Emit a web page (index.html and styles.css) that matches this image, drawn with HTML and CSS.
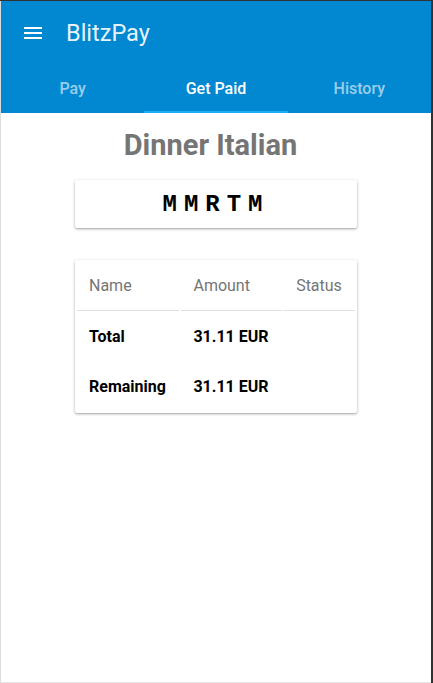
FILE: index.html
```html
<!DOCTYPE html>
<html>
<head>
<meta charset="utf-8">
<link rel="stylesheet" href="styles.css">
</head>
<body>
<div class="frame">
  <header class="appbar">
    <div class="toolbar">
      <svg class="menu" width="24" height="24" viewBox="0 0 24 24"><path fill="#fff" d="M3 18h18v-2H3v2zm0-5h18v-2H3v2zm0-7v2h18V6H3z"/></svg>
      <span class="brand">BlitzPay</span>
    </div>
    <nav class="tabs">
      <div class="tab">Pay</div>
      <div class="tab active">Get Paid</div>
      <div class="tab">History</div>
    </nav>
  </header>
  <main class="content">
    <h1 class="title">Dinner Italian</h1>
    <div class="card code">MMRTM</div>
    <div class="card">
      <table class="bill">
        <thead>
          <tr><th>Name</th><th>Amount</th><th>Status</th></tr>
        </thead>
        <tbody>
          <tr><td>Total</td><td>31.11 EUR</td><td></td></tr>
          <tr><td>Remaining</td><td>31.11 EUR</td><td></td></tr>
        </tbody>
      </table>
    </div>
  </main>
</div>
</body>
</html>
```
FILE: styles.css
```css
html, body {
  margin: 0;
  padding: 0;
  background: #2f3230;
}
.frame {
  box-sizing: border-box;
  width: 431px;
  height: 682px;
  margin-top: 1px;
  background: #fff;
  border-left: 1px solid #dcdcdc;
  border-bottom: 1px solid #e6e6e6;
  font-family: Roboto, "Noto Sans", sans-serif;
  display: flex;
  flex-direction: column;
}
.appbar {
  background: #0288d1;
  color: #fff;
}
.toolbar {
  height: 64px;
  display: flex;
  align-items: center;
  padding-left: 20px;
}
.menu {
  display: block;
}
.brand {
  margin-left: 21px;
  font-size: 23.5px;
  color: rgba(255,255,255,0.92);
}
.tabs {
  display: grid;
  grid-template-columns: repeat(3, 1fr);
  height: 48px;
}
.tab {
  display: flex;
  align-items: center;
  justify-content: center;
  font-size: 16px;
  font-weight: 500;
  color: rgba(255,255,255,0.6);
  border-bottom: 2px solid transparent;
  box-sizing: border-box;
}
.tab.active {
  color: #fff;
  border-bottom-color: #1aacf6;
}
.content {
  width: 282px;
  margin: 0 auto;
  display: flex;
  flex-direction: column;
}
.title {
  margin: 16px 0 0;
  padding-right: 11px;
  height: 33px;
  line-height: 33px;
  text-align: center;
  font-size: 29px;
  font-weight: 700;
  color: #757575;
}
.card {
  background: #fff;
  border-radius: 2px;
  box-shadow: 0 1px 3px rgba(0,0,0,0.25), 0 1px 2px rgba(0,0,0,0.15);
}
.code {
  margin-top: 18px;
  height: 48px;
  display: flex;
  align-items: center;
  justify-content: center;
  font-family: "Liberation Mono", "DejaVu Sans Mono", monospace;
  font-weight: 700;
  font-size: 24px;
  letter-spacing: 7px;
  color: #000;
}
.code + .card {
  margin-top: 32px;
}
.bill {
  width: 100%;
  border-spacing: 2px;
  font-size: 16px;
}
.bill th {
  text-align: left;
  font-weight: 400;
  color: #757575;
  height: 46px;
  padding: 0 12px 2px;
  border-bottom: 1px solid #e0e0e0;
}
.bill td {
  height: 46px;
  padding: 0 12px 2px;
  font-weight: 700;
  color: #000;
  white-space: nowrap;
}
```
